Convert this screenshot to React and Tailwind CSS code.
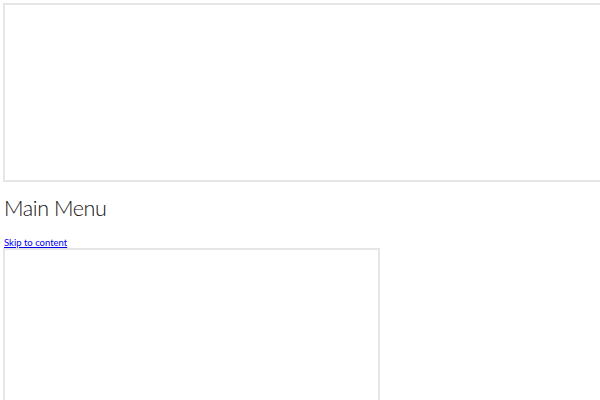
export default function App() {
  return (
    <div className="bg-white h-[400px] pl-[3px] pt-[3px] overflow-hidden" style={{ fontFamily: "Lato, 'Open Sans', sans-serif" }}>
      <div className="w-[640px] h-[179px] border-2 border-[#e6e6e6]" />
      <h1 className="text-[21.5px] font-light text-[#111] leading-none tracking-[-0.4px] mt-[16px] ml-[1px]">Main Menu</h1>
      <a href="#content" className="block w-fit text-[9.5px] leading-[10px] text-[#0000ee] underline mt-[18px] ml-[1px]">
        Skip to content
      </a>
      <div className="w-[377px] h-[200px] border-2 border-[#e6e6e6]" />
    </div>
  );
}
